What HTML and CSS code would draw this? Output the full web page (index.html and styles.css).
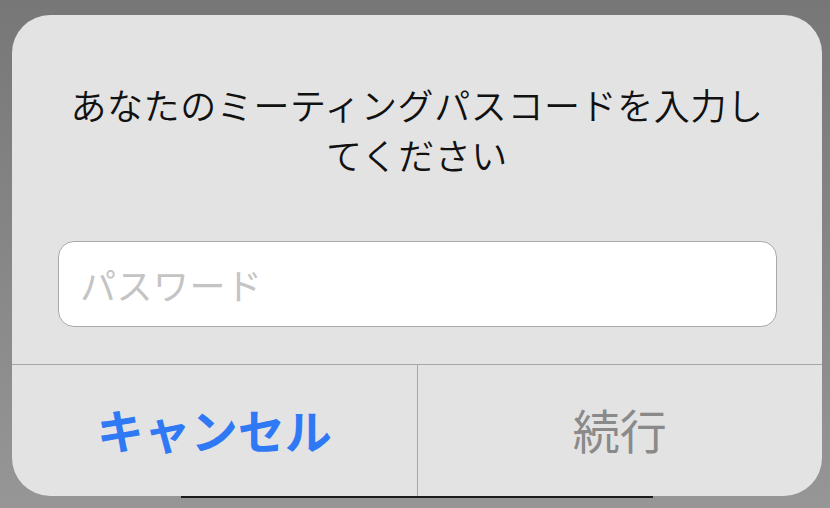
FILE: index.html
```html
<!DOCTYPE html>
<html lang="ja">
<head>
<meta charset="utf-8">
<link rel="stylesheet" href="styles.css">
</head>
<body>
<div class="screen">
  <div class="alert">
    <p class="title">あなたのミーティングパスコードを入力し<br>てください</p>
    <div class="field-wrap">
      <div class="field"><span class="placeholder">パスワード</span></div>
    </div>
    <div class="actions">
      <div class="btn cancel">キャンセル</div>
      <div class="btn ok">続行</div>
    </div>
  </div>
</div>
</body>
</html>
```

FILE: styles.css
```css
* { box-sizing: border-box; }
html, body { margin: 0; padding: 0; }
body {
  width: 830px;
  height: 508px;
  overflow: hidden;
  font-family: "Noto Sans CJK JP", "Noto Sans", sans-serif;
}
.screen {
  position: relative;
  width: 830px;
  height: 508px;
  background: linear-gradient(#777777, #969696);
  padding: 15px 8px 12px 12px;
}
.screen::after {
  content: "";
  position: absolute;
  left: 181px;
  width: 472px;
  top: 496px;
  height: 2px;
  background: #1c1c1c;
}
.alert {
  position: relative;
  z-index: 1;
  width: 810px;
  height: 481px;
  background: #e3e3e3;
  border-radius: 38px;
  display: flex;
  flex-direction: column;
  overflow: hidden;
}
.title {
  margin: 0;
  padding-top: 64px;
  text-align: center;
  font-size: 36px;
  line-height: 50px;
  color: #111;
  letter-spacing: 0.6px;
  font-weight: 350;
}
.field-wrap {
  padding: 62px 45px 0 46px;
}
.field {
  height: 86px;
  background: #fff;
  border: 1px solid #a9a9a9;
  border-radius: 16px;
  display: flex;
  align-items: center;
  padding-left: 21px;
}
.placeholder {
  font-size: 36px;
  color: #c4c4c4;
  letter-spacing: 0.5px;
}
.actions {
  margin-top: 37px;
  flex: 1;
  display: flex;
  border-top: 1px solid #a6a6a6;
}
.btn {
  flex: 1;
  display: flex;
  align-items: center;
  justify-content: center;
  font-size: 47px;
  padding-bottom: 4px;
}
.cancel {
  color: #3079f5;
  font-weight: 700;
  border-right: 1px solid #a6a6a6;
}
.ok {
  color: #8a8a8a;
}
```
